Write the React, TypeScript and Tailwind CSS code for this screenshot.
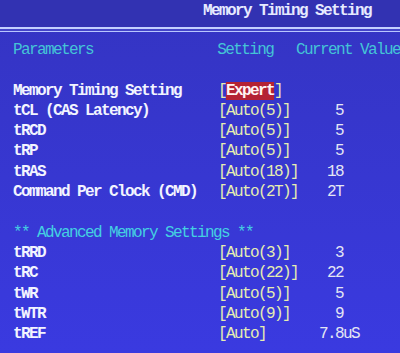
const rows: { label: string; setting?: string; value?: string; highlight?: boolean; section?: boolean }[] = [
  { label: "" },
  { label: "Memory Timing Setting", setting: "Expert", highlight: true },
  { label: "tCL (CAS Latency)", setting: "Auto(5)", value: "  5" },
  { label: "tRCD", setting: "Auto(5)", value: "  5" },
  { label: "tRP", setting: "Auto(5)", value: "  5" },
  { label: "tRAS", setting: "Auto(18)", value: " 18" },
  { label: "Command Per Clock (CMD)", setting: "Auto(2T)", value: " 2T" },
  { label: "" },
  { label: "** Advanced Memory Settings **", section: true },
  { label: "tRRD", setting: "Auto(3)", value: "  3" },
  { label: "tRC", setting: "Auto(22)", value: " 22" },
  { label: "tWR", setting: "Auto(5)", value: "  5" },
  { label: "tWTR", setting: "Auto(9)", value: "  9" },
  { label: "tREF", setting: "Auto", value: "7.8uS" },
]

export default function App() {
  return (
    <div className="w-[400px] h-[353px] overflow-hidden bg-linear-to-b from-[#3434c2] to-[#3a3ae0] font-['Liberation_Mono',monospace] text-[16px] tracking-[-1.6px] font-bold whitespace-pre">
      {/* title bar */}
      <div className="h-[27px] bg-[#3232b2] pl-[203px] leading-[23px] text-[#e6eaff]">Memory Timing Setting</div>
      <div className="h-[2px] bg-[#c4d0ff]" />
      <div className="h-[2px] bg-[#4444c8]" />
      <div className="h-[1px] bg-[#b8c6ff]" />

      <div className="pt-[8px] pl-[13px] leading-[20.3px]">
        {/* column headings */}
        <div className="flex h-[20.3px] text-[#44c4d6] font-normal">
          <div className="w-[205px]">Parameters</div>
          <div className="w-[79px]">Setting</div>
          <div>Current Value</div>
        </div>

        {rows.map((r, i) =>
          r.section ? (
            <div key={i} className="h-[20.3px] text-[#44d0e2] font-normal">{r.label}</div>
          ) : (
            <div key={i} className="flex h-[20.3px]">
              <div className="w-[205px] text-[#f2f4ff]">{r.label}</div>
              <div className="w-[101px] text-[#e6eeb0] font-normal">
                {r.setting && (
                  <>
                    [
                    <span className={r.highlight ? "bg-[#b42234] text-[#fff4f4] font-bold" : ""}>{r.setting}</span>]
                  </>
                )}
              </div>
              <div className="text-[#e4e6f4] font-normal">{r.value}</div>
            </div>
          )
        )}
      </div>
    </div>
  )
}
